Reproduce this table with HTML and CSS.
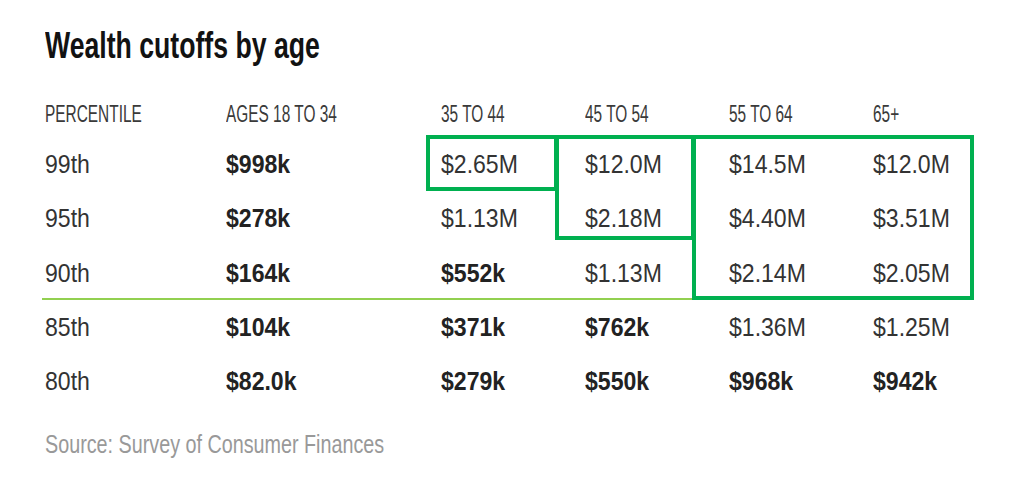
FILE: index.html
```html
<!DOCTYPE html>
<html>
<head>
<meta charset="utf-8">
<link rel="stylesheet" href="styles.css">
</head>
<body>
<div class="page">
  <h1 class="title"><span class="t">Wealth cutoffs by age</span></h1>
  <div class="table">
    <div class="row head">
      <div class="cell"><span class="t">PERCENTILE</span></div>
      <div class="cell"><span class="t">AGES 18 TO 34</span></div>
      <div class="cell"><span class="t">35 TO 44</span></div>
      <div class="cell"><span class="t">45 TO 54</span></div>
      <div class="cell"><span class="t">55 TO 64</span></div>
      <div class="cell"><span class="t">65+</span></div>
    </div>
    <div class="row">
      <div class="cell"><span class="t">99th</span></div>
      <div class="cell b"><span class="t">$998k</span></div>
      <div class="cell"><span class="t">$2.65M</span></div>
      <div class="cell"><span class="t">$12.0M</span></div>
      <div class="cell"><span class="t">$14.5M</span></div>
      <div class="cell"><span class="t">$12.0M</span></div>
    </div>
    <div class="row">
      <div class="cell"><span class="t">95th</span></div>
      <div class="cell b"><span class="t">$278k</span></div>
      <div class="cell"><span class="t">$1.13M</span></div>
      <div class="cell"><span class="t">$2.18M</span></div>
      <div class="cell"><span class="t">$4.40M</span></div>
      <div class="cell"><span class="t">$3.51M</span></div>
    </div>
    <div class="row">
      <div class="cell"><span class="t">90th</span></div>
      <div class="cell b"><span class="t">$164k</span></div>
      <div class="cell b"><span class="t">$552k</span></div>
      <div class="cell"><span class="t">$1.13M</span></div>
      <div class="cell"><span class="t">$2.14M</span></div>
      <div class="cell"><span class="t">$2.05M</span></div>
    </div>
    <div class="row">
      <div class="cell"><span class="t">85th</span></div>
      <div class="cell b"><span class="t">$104k</span></div>
      <div class="cell b"><span class="t">$371k</span></div>
      <div class="cell b"><span class="t">$762k</span></div>
      <div class="cell"><span class="t">$1.36M</span></div>
      <div class="cell"><span class="t">$1.25M</span></div>
    </div>
    <div class="row">
      <div class="cell"><span class="t">80th</span></div>
      <div class="cell b"><span class="t">$82.0k</span></div>
      <div class="cell b"><span class="t">$279k</span></div>
      <div class="cell b"><span class="t">$550k</span></div>
      <div class="cell b"><span class="t">$968k</span></div>
      <div class="cell b"><span class="t">$942k</span></div>
    </div>
    <div class="rule"></div>
    <div class="box box1"></div>
    <div class="box box2"></div>
    <div class="box box3"></div>
  </div>
  <p class="source"><span class="t">Source: Survey of Consumer Finances</span></p>
</div>
</body>
</html>
```
FILE: styles.css
```css
html, body {
  margin: 0;
  padding: 0;
  background: #ffffff;
}
.page {
  padding: 26px 0 0 45px;
  font-family: "Liberation Sans", Arial, sans-serif;
  color: #333333;
}
.t {
  display: inline-block;
  white-space: nowrap;
  transform-origin: 0 50%;
}
.title {
  margin: 0;
  font-size: 36px;
  line-height: 40px;
  font-weight: bold;
  color: #121212;
}
.title .t {
  transform: scaleX(0.74);
}
.table {
  position: relative;
  margin-top: 33px;
  width: 930px;
}
.row {
  display: grid;
  grid-template-columns: 181px 215px 144px 144px 144px 1fr;
  height: 54.25px;
  align-items: center;
  font-size: 26.5px;
  line-height: 30px;
}
.row .t {
  transform: scaleX(0.87);
}
.row.head {
  height: 30px;
  font-size: 23px;
  color: #3a3a3a;
  margin-bottom: 8px;
}
.row.head .t {
  transform: scaleX(0.67);
}
.cell.b {
  font-weight: bold;
  color: #222222;
}
.rule {
  position: absolute;
  left: -3px;
  top: 199px;
  width: 668px;
  height: 2px;
  background: #92d050;
}
.box {
  position: absolute;
  border: 4px solid #00b050;
  box-sizing: border-box;
}
.box1 { left: 381px; top: 36px; width: 132px; height: 56px; }
.box2 { left: 510px; top: 36px; width: 140px; height: 105px; }
.box3 { left: 647px; top: 36px; width: 282px; height: 165px; }
.source {
  margin: 21px 0 0;
  font-size: 25px;
  line-height: 30px;
  color: #999999;
}
.source .t {
  transform: scaleX(0.79);
}
```
